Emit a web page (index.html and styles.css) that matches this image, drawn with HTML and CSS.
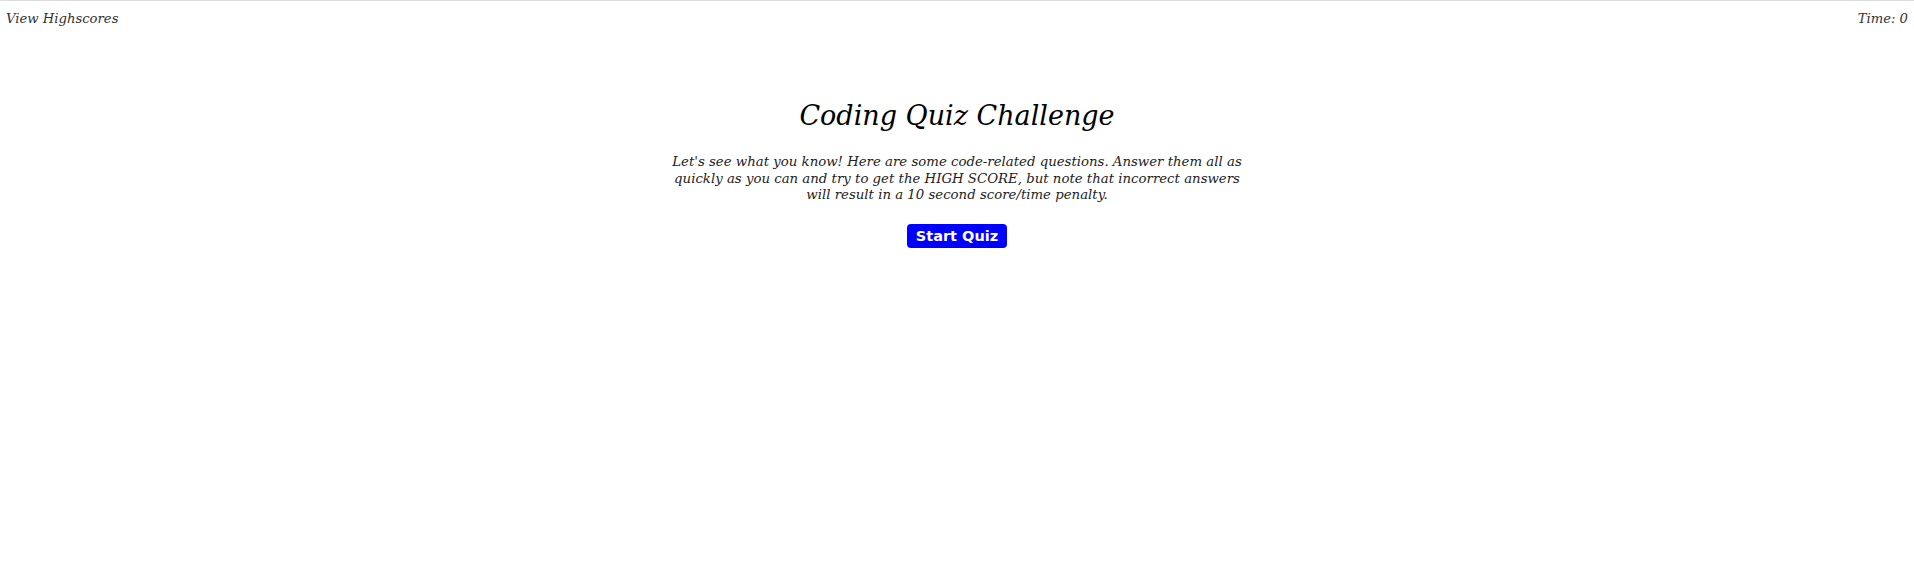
FILE: index.html
```html
<!DOCTYPE html>
<html lang="en">
<head>
<meta charset="utf-8">
<title>Coding Quiz</title>
<link rel="stylesheet" href="styles.css">
</head>
<body>
<header class="topbar">
  <a class="highscores">View Highscores</a>
  <div class="timer">Time: <span>0</span></div>
</header>
<main class="quiz">
  <h1 class="title">Coding Quiz Challenge</h1>
  <p class="intro">Let's see what you know! Here are some code-related questions. Answer them all as quickly as you can and try to get the HIGH SCORE, but note that incorrect answers will result in a 10 second score/time penalty.</p>
  <button class="start">Start Quiz</button>
</main>
</body>
</html>
```
FILE: styles.css
```css
html, body {
  margin: 0;
  padding: 0;
  background: #fff;
}
body {
  border-top: 1px solid #dcdcdc;
  font-family: "DejaVu Serif", serif;
  font-style: italic;
  color: #111;
}
.topbar {
  display: flex;
  justify-content: space-between;
  align-items: center;
  padding: 10px 6px 0 6px;
  font-size: 13.2px;
  color: #333;
}
.highscores {
  color: #333;
  cursor: pointer;
}
.quiz {
  display: flex;
  flex-direction: column;
  align-items: center;
  margin-top: 74px;
}
.title {
  margin: 0;
  font-weight: normal;
  font-size: 27px;
  color: #000;
}
.intro {
  margin: 23px 0 0 0;
  width: 578px;
  text-align: center;
  font-size: 13.3px;
  line-height: 16.5px;
  color: #222;
}
.start {
  margin-top: 20px;
  background: #0000ff;
  color: #fff;
  border: none;
  border-radius: 4px;
  padding: 4px 9px;
  font-family: "DejaVu Sans", sans-serif;
  font-style: normal;
  font-weight: bold;
  font-size: 14.5px;
  cursor: pointer;
}
```
